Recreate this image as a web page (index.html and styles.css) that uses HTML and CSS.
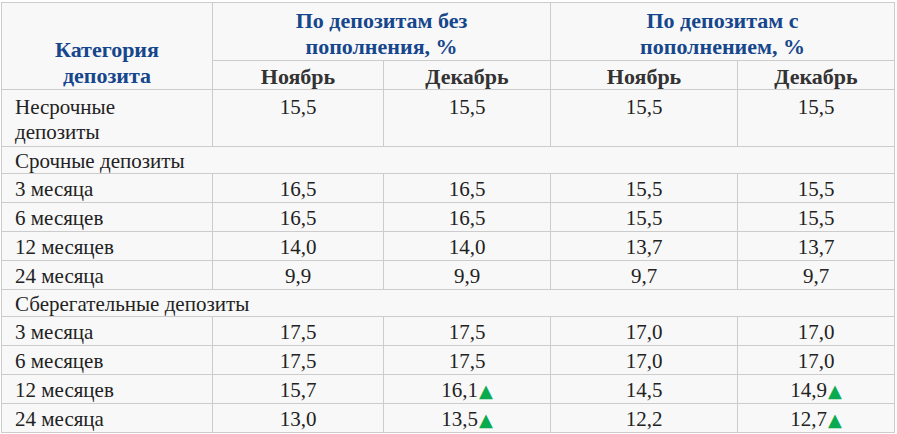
FILE: index.html
```html
<!DOCTYPE html>
<html lang="ru">
<head>
<meta charset="utf-8">
<title>Ставки по депозитам</title>
<link rel="stylesheet" href="styles.css">
</head>
<body>
<table class="rates">
  <colgroup>
    <col class="c-cat">
    <col class="c-a1">
    <col class="c-a2">
    <col class="c-b1">
    <col class="c-b2">
  </colgroup>
  <thead>
    <tr class="h1">
      <th class="cat" rowspan="2">Категория<br>депозита</th>
      <th class="grp" colspan="2">По депозитам без<br>пополнения, %</th>
      <th class="grp" colspan="2">По депозитам с<br>пополнением, %</th>
    </tr>
    <tr class="h2">
      <th class="mon">Ноябрь</th>
      <th class="mon">Декабрь</th>
      <th class="mon">Ноябрь</th>
      <th class="mon">Декабрь</th>
    </tr>
  </thead>
  <tbody>
    <tr class="tall">
      <td class="name">Несрочные<br>депозиты</td>
      <td class="num">15,5</td>
      <td class="num">15,5</td>
      <td class="num">15,5</td>
      <td class="num">15,5</td>
    </tr>
    <tr class="sec"><td class="name" colspan="5">Срочные депозиты</td></tr>
    <tr class="row"><td class="name">3 месяца</td><td class="num">16,5</td><td class="num">16,5</td><td class="num">15,5</td><td class="num">15,5</td></tr>
    <tr class="row"><td class="name">6 месяцев</td><td class="num">16,5</td><td class="num">16,5</td><td class="num">15,5</td><td class="num">15,5</td></tr>
    <tr class="row"><td class="name">12 месяцев</td><td class="num">14,0</td><td class="num">14,0</td><td class="num">13,7</td><td class="num">13,7</td></tr>
    <tr class="row"><td class="name">24 месяца</td><td class="num">9,9</td><td class="num">9,9</td><td class="num">9,7</td><td class="num">9,7</td></tr>
    <tr class="sec"><td class="name" colspan="5">Сберегательные депозиты</td></tr>
    <tr class="row"><td class="name">3 месяца</td><td class="num">17,5</td><td class="num">17,5</td><td class="num">17,0</td><td class="num">17,0</td></tr>
    <tr class="row"><td class="name">6 месяцев</td><td class="num">17,5</td><td class="num">17,5</td><td class="num">17,0</td><td class="num">17,0</td></tr>
    <tr class="row"><td class="name">12 месяцев</td><td class="num">15,7</td><td class="num">16,1<span class="up">▲</span></td><td class="num">14,5</td><td class="num">14,9<span class="up">▲</span></td></tr>
    <tr class="row"><td class="name">24 месяца</td><td class="num">13,0</td><td class="num">13,5<span class="up">▲</span></td><td class="num">12,2</td><td class="num">12,7<span class="up">▲</span></td></tr>
  </tbody>
</table>
</body>
</html>
```
FILE: styles.css
```css
html, body {
  margin: 0;
  padding: 0;
  background: #ffffff;
}

body {
  padding: 2px 0 0 1px;
  font-family: "Liberation Serif", "Times New Roman", serif;
  font-size: 21px;
  color: #222222;
}

.rates {
  border-collapse: collapse;
  table-layout: fixed;
  width: 893px;
  background: #f8f8f8;
  font-family: inherit;
}

.c-cat { width: 211px; }
.c-a1 { width: 171px; }
.c-a2 { width: 167px; }
.c-b1 { width: 187px; }
.c-b2 { width: 157px; }

.rates th,
.rates td {
  border: 1px solid #cccccc;
  padding: 4px 5px 1px;
  line-height: 23px;
  vertical-align: top;
  font-family: inherit;
}

.rates th {
  font-weight: bold;
  text-align: center;
  font-size: 22px;
}

.h1 th {
  line-height: 26px;
  padding: 5px 5px 0;
}

.grp {
  color: #16468c;
}

.cat {
  color: #16468c;
  vertical-align: bottom !important;
  padding: 0 5px 0 !important;
}

.mon {
  color: #333333;
}

.tall td {
  line-height: 25px;
  padding: 5px 5px 1px;
}

.sec td {
  padding: 3px 5px 0;
}

.name {
  text-align: left;
  padding-left: 13px !important;
}

.num {
  text-align: center;
}

.up {
  color: #0aab4f;
  font-family: "DejaVu Sans", sans-serif;
  font-size: 18px;
  margin-left: 1px;
}
```
